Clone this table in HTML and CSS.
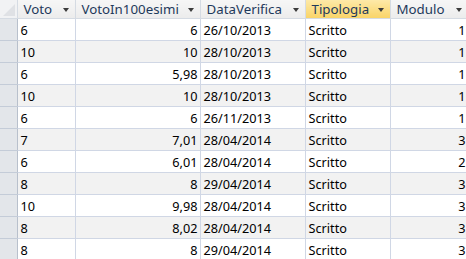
FILE: index.html
```html
<!DOCTYPE html>
<html>
<head>
<meta charset="utf-8">
<link rel="stylesheet" href="styles.css">
</head>
<body>
<table class="grid">
  <colgroup>
    <col class="c-sel"><col class="c-voto"><col class="c-v100"><col class="c-data"><col class="c-tipo"><col class="c-mod">
  </colgroup>
  <thead>
    <tr>
      <th class="corner"><span class="tri"></span></th>
      <th><div class="hd"><span>Voto</span><span class="arr"></span></div></th>
      <th><div class="hd"><span>VotoIn100esimi</span><span class="arr"></span></div></th>
      <th><div class="hd"><span>DataVerifica</span><span class="arr"></span></div></th>
      <th class="active"><div class="hd"><span>Tipologia</span><span class="arr"></span></div></th>
      <th><div class="hd"><span>Modulo</span><span class="arr"></span></div></th>
    </tr>
  </thead>
  <tbody>
    <tr><td class="sel"></td><td>6</td><td class="num">6</td><td>26/10/2013</td><td>Scritto</td><td class="num">1</td></tr>
    <tr><td class="sel"></td><td>10</td><td class="num">10</td><td>28/10/2013</td><td>Scritto</td><td class="num">1</td></tr>
    <tr><td class="sel"></td><td>6</td><td class="num">5,98</td><td>28/10/2013</td><td>Scritto</td><td class="num">1</td></tr>
    <tr><td class="sel"></td><td>10</td><td class="num">10</td><td>28/10/2013</td><td>Scritto</td><td class="num">1</td></tr>
    <tr><td class="sel"></td><td>6</td><td class="num">6</td><td>26/11/2013</td><td>Scritto</td><td class="num">1</td></tr>
    <tr><td class="sel"></td><td>7</td><td class="num">7,01</td><td>28/04/2014</td><td>Scritto</td><td class="num">3</td></tr>
    <tr><td class="sel"></td><td>6</td><td class="num">6,01</td><td>28/04/2014</td><td>Scritto</td><td class="num">2</td></tr>
    <tr><td class="sel"></td><td>8</td><td class="num">8</td><td>29/04/2014</td><td>Scritto</td><td class="num">3</td></tr>
    <tr><td class="sel"></td><td>10</td><td class="num">9,98</td><td>28/04/2014</td><td>Scritto</td><td class="num">3</td></tr>
    <tr><td class="sel"></td><td>8</td><td class="num">8,02</td><td>28/04/2014</td><td>Scritto</td><td class="num">3</td></tr>
    <tr><td class="sel"></td><td>8</td><td class="num">8</td><td>29/04/2014</td><td>Scritto</td><td class="num">3</td></tr>
  </tbody>
</table>
</body>
</html>
```

FILE: styles.css
```css
html, body {
  margin: 0;
  padding: 0;
  background: #ffffff;
  overflow: hidden;
}
.grid {
  border-collapse: collapse;
  table-layout: fixed;
  width: 468px;
  font-family: "Noto Sans", "Open Sans", sans-serif;
  font-size: 12.7px;
  color: #000;
}
.c-sel { width: 17px; }
.c-voto { width: 58px; }
.c-v100 { width: 125px; }
.c-data { width: 105px; }
.c-tipo { width: 85px; }
.c-mod { width: 78px; }

th {
  height: 18px;
  padding: 0;
  font-weight: normal;
  font-size: 13.3px;
  text-align: left;
  color: #1e395b;
  background: linear-gradient(#f6f6f6, #ececec);
  border-right: 1px solid #d5dbe3;
  border-bottom: 1px solid #d5dbe3;
}
th.active {
  background: linear-gradient(#fde9a8, #f9d468);
}
th.corner {
  position: relative;
  background: #f1f2f4;
}
.tri {
  position: absolute;
  right: 2px;
  bottom: 2px;
  width: 0;
  height: 0;
  border-left: 12px solid transparent;
  border-bottom: 12px solid #dfe1e5;
}
.hd {
  display: flex;
  align-items: center;
  justify-content: space-between;
  padding: 0 6px 0 6px;
  height: 18px;
}
.arr {
  flex: none;
  width: 0;
  height: 0;
  border-left: 3.5px solid transparent;
  border-right: 3.5px solid transparent;
  border-top: 4px solid #3c3c3c;
  margin-top: 2px;
}
td {
  height: 21px;
  padding: 0 2px 0 3px;
  border-right: 1px solid #d0d7e5;
  border-bottom: 1px solid #d0d7e5;
  white-space: nowrap;
  overflow: hidden;
}
td.num { text-align: right; padding-right: 2px; }
tbody tr:nth-child(odd) td { background: #ffffff; }
tbody tr:nth-child(even) td { background: #f2f2f2; }
tbody tr td.sel {
  background: #e3e6ea;
  border-right: 1px solid #b8c0cc;
  border-bottom: 1px solid #c4ccd8;
  padding: 0;
}
```
